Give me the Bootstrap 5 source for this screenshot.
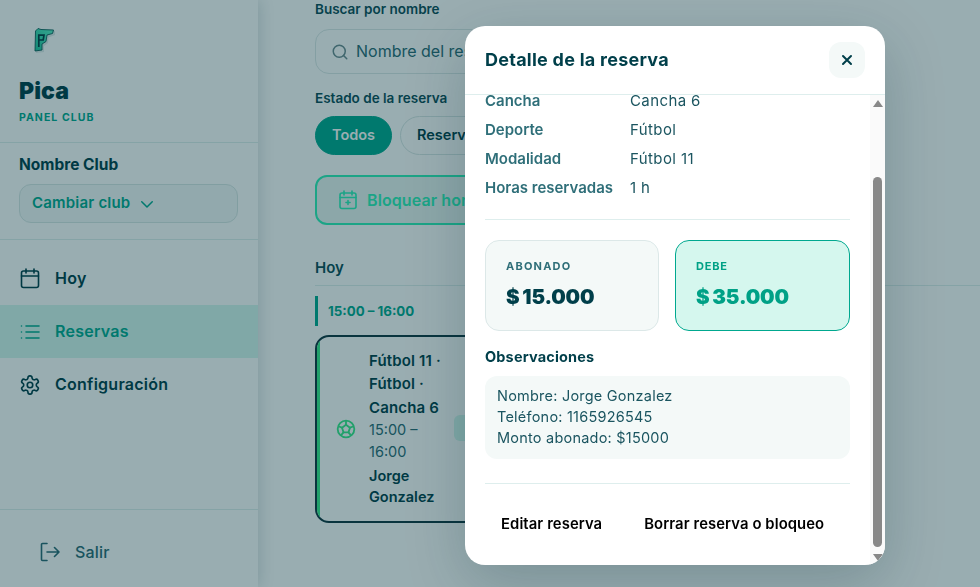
<!DOCTYPE html>
<html lang="es">
<head>
<meta charset="utf-8">
<title>Pica</title>
<link rel="stylesheet" href="https://cdn.jsdelivr.net/npm/bootstrap@5.3.0/dist/css/bootstrap.min.css">
<style>
html,body{height:100%;overflow:hidden}
body{font-family:Inter,"Noto Sans",sans-serif;color:#003f4a;background:#fff}
svg{display:block;flex:none}
.shell{height:587px}
.side{width:258px;height:587px;background:#fff;box-shadow:2px 0 14px rgba(0,50,60,.16);position:relative;z-index:1}
.brand{height:143px;padding:27px 0 0 19px;border-bottom:1px solid #deeeed}
.logo{margin:0 0 0 14px}
.brand-name{font-size:23px;font-weight:900;line-height:28px;margin-top:23px;letter-spacing:.05px}
.brand-sub{font-size:10.5px;font-weight:700;letter-spacing:1.05px;color:#00a88f;line-height:14px;margin-top:6px}
.club{height:97px;padding:12px 19px 0;border-bottom:1px solid #deeeed}
.club-name{font-size:15.5px;font-weight:700;line-height:20px}
.club-btn{width:219px;height:39px;margin-top:9px;padding:0 12px;background:#f4f9f8;border:1px solid #d8e6e5;border-radius:12px;color:#00a88f;font-size:15px;font-weight:600;letter-spacing:.2px}
.club-btn:hover,.club-btn:active{background:#f4f9f8;color:#00a88f}
.nav-list{padding-top:12px}
.nav-row{height:53px;padding-left:20px;gap:15px;font-size:16px;font-weight:600;letter-spacing:.25px;color:#003f4a;text-decoration:none}
.nav-row span{padding-bottom:2px}
.nav-row.active{background:#d5f7ee;color:#00a88f}
.gear{margin:0 -1px}
.exit{height:78px;border-top:1px solid #deeeed;padding:7px 0 0 40px;gap:15px;font-size:16px;letter-spacing:.2px;font-weight:500;color:#2a6a75}
.main{flex:1;padding-left:57px;min-width:0;position:relative}
.fld-label{font-size:13.5px;font-weight:600;line-height:16px;margin:0;padding-top:1px;color:#0b4c57}
.fld-label.mt-3{padding-top:0}
.search{width:420px;height:45px;margin-top:12px;padding-left:15px;gap:7px;border:1px solid #dce8e8;border-radius:14px;font-size:16px;color:#2a6a75;background:#fff}
.search span{padding-bottom:2px}
.chips{gap:8px;margin-top:10px}
.chip{height:39px;border-radius:20px;font-size:14.5px;font-weight:600;padding:0 16px 1px;border:1px solid #d8e6e5;background:#fff;color:#003f4a}
.chip.on{background:#00a88f;border-color:#00a88f;color:#fff;width:77px;padding:0 0 2px;justify-content:center}
.chip.off{width:130px;justify-content:flex-start}
.block-btn{width:400px;height:50px;margin-top:20px;padding-left:21px;gap:9px;border:2px solid #2ff0b8;border-radius:12px;background:#e9f5f2;color:#2ff0b8;font-size:16px;letter-spacing:.1px;font-weight:600;box-sizing:border-box}
.day{margin-top:33px;padding-bottom:7px;border-bottom:1px solid #deeeed;font-size:15px;font-weight:600;line-height:20px;color:#0b4c57}
.slot{margin-top:10px;height:30px;border-left:3px solid #00a88f;padding:1px 0 0 10px;font-size:13.3px;font-weight:700;color:#00a88f}
.match{width:350px;height:188px;margin-top:9px;border:2px solid #0f3640;border-radius:14px;position:relative;overflow:hidden;padding:12px 0 0 52px;background:#fff}
.match::before{content:"";position:absolute;left:0;top:0;bottom:0;width:3px;background:#39e98a}
.match-ball{position:absolute;left:19px;top:82px}
.match-title{font-size:15px;font-weight:600;line-height:23.4px;width:85px;letter-spacing:.15px}
.match-time{font-size:14.5px;line-height:22px;color:#2a6a75;width:70px;font-weight:400}
.match-who{font-size:14.5px;font-weight:600;line-height:21px;width:85px;margin-top:2px}
.match-pill{position:absolute;left:137px;top:78px;width:120px;height:26px;border-radius:6px;background:#d5f7ee}

.modal-backdrop.veil{opacity:1;background:rgba(0,50,60,.4);z-index:5}
.modal.sheet{z-index:6;overflow:hidden;display:block}
.sheet .modal-dialog{width:420px;max-width:420px;margin:26px 0 0 465px}
.sheet .modal-content{height:539px;border:0;border-radius:20px;overflow:hidden;box-shadow:0 18px 60px rgba(0,40,50,.22);color:#003f4a;font-family:Inter,"Noto Sans",sans-serif}
.sheet .modal-header{height:69px;padding:0 20px;border-bottom:1px solid #deeeed;border-radius:0;flex:none}
.sheet .modal-title{font-size:18px;font-weight:700;line-height:24px;letter-spacing:.25px}
.x-btn{width:36px;height:36px;background:#f4f9f8;border:0;border-radius:12px;padding:0;color:#003f4a}
.sheet .modal-body{padding:0 35px 0 20px;position:static;overflow:hidden}
.kv{height:29px;font-size:15px;line-height:29px}
.kv dt{width:145px;margin:0;font-weight:600;color:#2f6f79;flex:none}
.kv dd{margin:0;color:#1b5560;font-weight:400;letter-spacing:.4px}
.facts{margin:-9px 0 17px}
.rule{height:1px;background:#deeeed;border:0;opacity:1;margin:0}
.money{gap:16px;margin-top:20px}
.tile{flex:1;height:91px;border:1px solid #dce8e8;border-radius:14px;background:#f4f9f8;padding:17px 20px 0}
.tile.due{flex:0 0 175px;background:#d5f7ee;border-color:#00a88f;color:#00a186}
.tile-k{font-size:11px;font-weight:700;letter-spacing:1.2px;line-height:16px;color:#2f6f79}
.due .tile-k{color:#00a186;letter-spacing:.8px}
.tile-v{font-size:20.5px;font-weight:900;line-height:30px;margin-top:8px;letter-spacing:-.2px;word-spacing:-1px}
.obs-t{font-size:14.5px;font-weight:700;line-height:20px;margin:16px 0 9px;letter-spacing:.15px}
.obs{height:83px;background:#f4f9f8;border-radius:12px;padding:9px 12px;font-size:14.5px;line-height:21px;color:#1b5560;letter-spacing:.22px}
.acts{margin-top:0;gap:42px;padding:29px 0 0 16px}
.act{background:none;border:0;padding:0;font-size:14.8px;letter-spacing:.1px;font-weight:600;color:#000;line-height:22px}
.bar{position:absolute;right:0;top:69px;bottom:0;width:15px;background:#fafafa}
.thumb{position:absolute;left:3px;width:9px;top:82px;height:370px;border-radius:5px;background:#888}
.arr{position:absolute;left:3px;width:0;height:0;border-left:5px solid transparent;border-right:5px solid transparent}
.arr.up{top:5px;border-bottom:7px solid #888}
.arr.dn{bottom:4px;border-top:7px solid #888}
</style>
</head>
<body>
<div class="shell d-flex">
  <aside class="side d-flex flex-column flex-shrink-0">
    <div class="brand">
      <svg class="logo" width="24" height="27" viewBox="0 0 24 27" aria-label="Logo Pica">
        <defs><linearGradient id="lg" x1="0" y1="1" x2="1" y2="0"><stop offset="0" stop-color="#1fc59d"/><stop offset="1" stop-color="#5ff2c8"/></linearGradient></defs>
        <path d="M2 25 L2.5 4 L5 1.5 L8 2.5 L21 3 L21 7 L14.5 9.5 L14 15 L10 18 L10 24 Z" fill="#dfe9e9" transform="translate(1 1)"/>
        <path d="M2 24 L2.5 4 L5 1.5 L8 2.5 L20.5 3 L19.5 6.5 L14 8 L13 14.5 L9 17 L9 23 Z" fill="url(#lg)" stroke="#0d5a58" stroke-width=".9" stroke-linejoin="round"/>
        <path d="M5.8 20 V8.2 H11 L10.2 13 H6" fill="none" stroke="#053c44" stroke-width="1.7"/>
      </svg>
      <div class="brand-name">Pica</div>
      <div class="brand-sub">PANEL CLUB</div>
    </div>
    <div class="club">
      <div class="club-name">Nombre Club</div>
      <button class="btn club-btn d-flex align-items-center gap-2" type="button">Cambiar club
        <svg width="18" height="18" viewBox="0 0 24 24" fill="none" stroke="currentColor" stroke-width="2" stroke-linecap="round" stroke-linejoin="round"><path d="m5 9 7 7 7-7"/></svg>
      </button>
    </div>
    <nav class="nav-list flex-grow-1">
      <a class="nav-row d-flex align-items-center" href="#">
        <svg width="20" height="21" viewBox="0 0 20 21" fill="none" stroke="currentColor" stroke-width="1.6" stroke-linecap="round" stroke-linejoin="round"><rect x="1.5" y="3" width="17" height="16.5" rx="2"/><path d="M1.5 8h17M6 1v4M14 1v4"/></svg>
        <span>Hoy</span></a>
      <a class="nav-row active d-flex align-items-center" href="#">
        <svg width="20" height="20" viewBox="0 0 20 20" fill="none" stroke="currentColor" stroke-width="1.6" stroke-linecap="round"><path d="M6 4h13M6 10h13M6 16h13M1.5 4h.01M1.5 10h.01M1.5 16h.01"/></svg>
        <span>Reservas</span></a>
      <a class="nav-row d-flex align-items-center" href="#">
        <svg width="22" height="22" viewBox="0 0 24 24" fill="none" stroke="currentColor" stroke-width="1.8" stroke-linecap="round" stroke-linejoin="round" class="gear"><path d="M12.22 2h-.44a2 2 0 0 0-2 2v.18a2 2 0 0 1-1 1.73l-.43.25a2 2 0 0 1-2 0l-.15-.08a2 2 0 0 0-2.73.73l-.22.38a2 2 0 0 0 .73 2.73l.15.1a2 2 0 0 1 1 1.72v.51a2 2 0 0 1-1 1.74l-.15.09a2 2 0 0 0-.73 2.73l.22.38a2 2 0 0 0 2.73.73l.15-.08a2 2 0 0 1 2 0l.43.25a2 2 0 0 1 1 1.73V20a2 2 0 0 0 2 2h.44a2 2 0 0 0 2-2v-.18a2 2 0 0 1 1-1.73l.43-.25a2 2 0 0 1 2 0l.15.08a2 2 0 0 0 2.73-.73l.22-.39a2 2 0 0 0-.73-2.73l-.15-.08a2 2 0 0 1-1-1.74v-.5a2 2 0 0 1 1-1.74l.15-.09a2 2 0 0 0 .73-2.73l-.22-.38a2 2 0 0 0-2.73-.73l-.15.08a2 2 0 0 1-2 0l-.43-.25a2 2 0 0 1-1-1.73V4a2 2 0 0 0-2-2z"/><circle cx="12" cy="12" r="3"/></svg>
        <span>Configuración</span></a>
    </nav>
    <div class="exit d-flex align-items-center">
      <svg width="20" height="20" viewBox="0 0 20 20" fill="none" stroke="currentColor" stroke-width="1.6" stroke-linecap="round" stroke-linejoin="round"><path d="M7 1.5H2.5a1 1 0 0 0-1 1v15a1 1 0 0 0 1 1H7M7 10h12M14.5 5.5 19 10l-4.5 4.5"/></svg>
      <span>Salir</span>
    </div>
  </aside>

  <main class="main">
    <p class="fld-label">Buscar por nombre</p>
    <div class="search d-flex align-items-center">
      <svg width="18" height="18" viewBox="0 0 24 24" fill="none" stroke="#6b8a8f" stroke-width="2" stroke-linecap="round"><circle cx="11" cy="11" r="8"/><path d="m21 21-4.3-4.3"/></svg>
      <span>Nombre del responsable</span>
    </div>
    <p class="fld-label mt-3">Estado de la reserva</p>
    <div class="chips d-flex">
      <span class="chip on d-flex align-items-center">Todos</span>
      <span class="chip off d-flex align-items-center">Reservadas</span>
    </div>
    <div class="block-btn d-flex align-items-center">
      <svg width="20" height="20" viewBox="0 0 20 20" fill="none" stroke="currentColor" stroke-width="1.6" stroke-linecap="round" stroke-linejoin="round"><rect x="2" y="3" width="16" height="15.5" rx="2"/><path d="M2 7.5h16M6 1v4M14 1v4M10 10.5v4M8 12.5h4"/></svg>
      <span>Bloquear horario</span>
    </div>
    <div class="day">Hoy</div>
    <div class="slot d-flex align-items-center">15:00 – 16:00</div>
    <article class="match">
      <svg class="match-ball" width="20" height="20" viewBox="0 0 24 24" fill="none" stroke="#39e98a" stroke-width="2.2" stroke-linecap="round" stroke-linejoin="round"><circle cx="12" cy="12" r="10"/><path d="m12 7 4.76 3.45L15 16H9l-1.76-5.55z"/><path d="M12 7V3m3 13 2.5 3m-.74-8.55 3.74-1.45M9 16l-2.56 3m.8-8.55L3.5 9"/></svg>
      <div class="match-title">Fútbol 11 · Fútbol · Cancha 6</div>
      <div class="match-time">15:00 – 16:00</div>
      <div class="match-who">Jorge Gonzalez</div>
      <span class="match-pill"></span>
    </article>
  </main>
</div>

<div class="modal-backdrop veil"></div>
<div class="modal sheet" tabindex="-1" role="dialog" aria-modal="true">
  <div class="modal-dialog">
    <div class="modal-content">
      <div class="modal-header d-flex align-items-center justify-content-between">
        <h5 class="modal-title">Detalle de la reserva</h5>
        <button class="x-btn d-flex align-items-center justify-content-center" type="button" aria-label="Cerrar">
          <svg width="14" height="14" viewBox="0 0 14 14" fill="none" stroke="currentColor" stroke-width="2" stroke-linecap="round"><path d="m3 3 8 8M11 3l-8 8"/></svg>
        </button>
      </div>
      <div class="modal-body">
        <dl class="facts">
          <div class="kv d-flex"><dt>Cancha</dt><dd>Cancha 6</dd></div>
          <div class="kv d-flex"><dt>Deporte</dt><dd>Fútbol</dd></div>
          <div class="kv d-flex"><dt>Modalidad</dt><dd>Fútbol 11</dd></div>
          <div class="kv d-flex"><dt>Horas reservadas</dt><dd>1 h</dd></div>
        </dl>
        <hr class="rule">
        <div class="money d-flex">
          <div class="tile"><div class="tile-k">ABONADO</div><div class="tile-v">$ 15.000</div></div>
          <div class="tile due"><div class="tile-k">DEBE</div><div class="tile-v">$ 35.000</div></div>
        </div>
        <div class="obs-t">Observaciones</div>
        <div class="obs">Nombre: Jorge Gonzalez<br>Teléfono: 1165926545<br>Monto abonado: $15000</div>
        <hr class="rule mt-4">
        <div class="acts d-flex">
          <button class="act" type="button">Editar reserva</button>
          <button class="act" type="button">Borrar reserva o bloqueo</button>
        </div>
      </div>
      <div class="bar"><span class="arr up"></span><span class="thumb"></span><span class="arr dn"></span></div>
    </div>
  </div>
</div>
<script src="https://cdn.jsdelivr.net/npm/bootstrap@5.3.0/dist/js/bootstrap.bundle.min.js"></script>
</body>
</html>
